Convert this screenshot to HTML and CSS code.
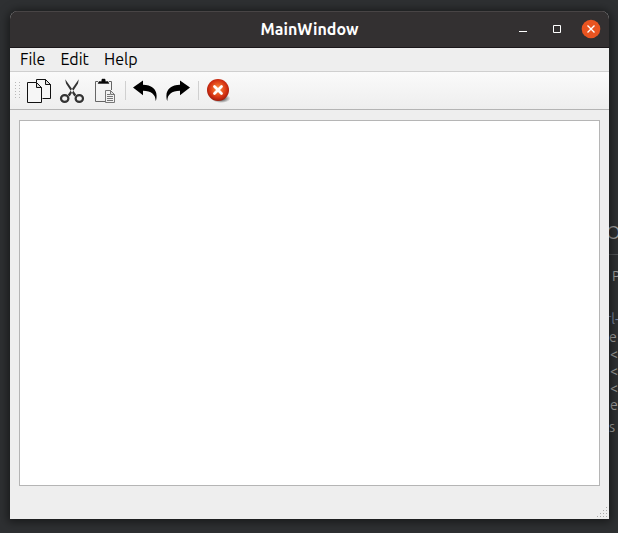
FILE: index.html
```html
<!DOCTYPE html>
<html lang="en">
<head>
<meta charset="utf-8">
<title>MainWindow</title>
<link rel="stylesheet" href="styles.css">
</head>
<body>
<div class="backdrop" aria-hidden="true">
  <span class="code heading">O</span>
  <span class="rule"></span>
  <span class="code label">P</span>
  <span class="code link">rl-</span>
  <span class="code l1">e</span>
  <span class="code l2">&lt;</span>
  <span class="code l3">&lt;</span>
  <span class="code l4">&lt;</span>
  <span class="code l5">e</span>
  <span class="code l6">s</span>
</div>
<main class="window">
  <header class="titlebar">
    <h1 class="title">MainWindow</h1>
    <div class="controls">
      <svg class="control" width="10" height="20" viewBox="0 0 10 20"><path d="M1 12.5h8" stroke="#fff"/></svg>
      <svg class="control" width="10" height="20" viewBox="0 0 10 20"><path d="M1.500 6.500h7v7h-7z" fill="none" stroke="#fff"/></svg>
      <svg class="control" width="20" height="20" viewBox="0 0 20 20"><circle cx="10" cy="10" r="9.300" fill="#e95420"/><path d="M6.500 6.500l7 7m0-7l-7 7" stroke="#fff" stroke-width="1.400"/></svg>
    </div>
  </header>
  <nav class="menubar">
    <span class="menu file">File</span>
    <span class="menu edit">Edit</span>
    <span class="menu help">Help</span>
  </nav>
  <div class="toolbar">
    <span class="handle"></span>
    <svg class="tool copy" width="26" height="26" viewBox="0 0 26 26"><g fill="#f6f6f6" stroke="#111" stroke-width="1"><path d="M10.500 4V1.500h9l5 5v14h-8"/><path d="M19.500 1.500v5h5z" fill="#ddd"/><path d="M1.500 4.500h9l5 5v15h-14z"/><path d="M10.500 4.500v5h5z" fill="#ddd"/></g></svg>
    <svg class="tool cut" width="26" height="26" viewBox="0 0 26 26"><path d="M6.200 1.200L7 5.500 15.400 18.400l1.800-1.700zM19.800 1.200L19 5.500 10.600 18.400l-1.800-1.700z" fill="#333"/><g fill="none" stroke="#333" stroke-width="2.200"><ellipse cx="5.700" cy="20.500" rx="3.700" ry="3.300"/><ellipse cx="20.300" cy="20.500" rx="3.700" ry="3.300"/></g><circle cx="13" cy="13.500" r=".7" fill="#ddd"/></svg>
    <svg class="tool paste" width="26" height="26" viewBox="0 0 26 26"><path d="M6 3.500H3.500v20H13M17 3.500h2.500V12" fill="none" stroke="#666"/><path d="M6 5.500L7 3.500h2.500L10 1h3l.500 2.500H16l1 2z" fill="#080808" stroke="#080808" stroke-width=".4"/><path d="M13.500 12.500h5l4 4v8h-9z" fill="#f2f2f2" stroke="#777"/><path d="M18.500 12.500v4h4z" fill="#ddd" stroke="#777"/><path d="M15 16.500h3M15 18.500h6M15 20.500h6M15 22.500h6" stroke="#777"/></svg>
    <span class="separator first"></span>
    <svg class="tool undo" width="26" height="26" viewBox="0 0 26 26"><path d="M1 9.500L11 2.500v4.200c8.200.1 13.600 4.200 13.600 11 0 2.300-.3 3.900-.9 5.300-.1-6.600-4.300-10-12.700-10.200v4.500z"/></svg>
    <svg class="tool redo" width="26" height="26" viewBox="0 0 26 26"><path d="M25 9.500L15 2.500v4.200C6.800 6.800 1.400 10.900 1.400 17.700c0 2.300.3 3.900.9 5.300.1-6.600 4.300-10 12.700-10.200v4.500z"/></svg>
    <span class="separator second"></span>
    <svg class="tool exit" width="26" height="26" viewBox="0 0 26 26"><defs><radialGradient id="red" cx=".5" cy=".45" r=".55"><stop offset="0" stop-color="#f9a052"/><stop offset=".4" stop-color="#ec5c25"/><stop offset=".75" stop-color="#d02e12"/><stop offset="1" stop-color="#9c1d0c"/></radialGradient><radialGradient id="shade"><stop offset=".4" stop-color="#333" stop-opacity=".65"/><stop offset="1" stop-color="#333" stop-opacity="0"/></radialGradient></defs><ellipse cx="16" cy="20.500" rx="9.500" ry="4.500" fill="url(#shade)"/><circle cx="13" cy="12" r="11" fill="url(#red)"/><path d="M9.500 8.500l7 7m0-7l-7 7" stroke="#fff" stroke-width="2.800" stroke-linecap="round"/></svg>
  </div>
  <section class="content"><div class="editor"></div></section>
  <svg class="grip" width="11" height="12" viewBox="0 0 11 12"><path d="M9 1h1v1H9zM6 4h1v1H6zM9 4h1v1H9zM3 7h1v1H3zM6 7h1v1H6zM9 7h1v1H9zM0 10h1v1H0zM3 10h1v1H3zM6 10h1v1H6zM9 10h1v1H9z" fill="#aaa"/></svg>
</main>
</body>
</html>
```
FILE: styles.css
```css
* { box-sizing: border-box; }
body {
  margin: 0;
  width: 618px;
  height: 533px;
  overflow: hidden;
  position: relative;
  padding: 11px 9px 14px 10px;
  background: #2e3032;
  font-family: Ubuntu, "Noto Sans", sans-serif;
}
.backdrop { position: absolute; inset: 0; overflow: hidden; }
.code {
  position: absolute;
  left: 609px;
  color: #a0a0a0;
  font-size: 14px;
  line-height: 18px;
}
.heading { left: 606px; top: 221px; font-size: 19px; line-height: 22px; }
.rule { position: absolute; left: 609px; top: 254px; width: 9px; height: 1px; background: #505254; }
.label { left: 612px; top: 267px; }
.link { left: 606px; top: 310px; color: #7884a0; }
.l1 { top: 328px; }
.l2 { left: 610px; top: 345px; }
.l3 { left: 610px; top: 362px; }
.l4 { left: 610px; top: 379px; }
.l5 { left: 610px; top: 396px; }
.l6 { top: 418px; }
.window {
  position: relative;
  display: flex;
  flex-direction: column;
  height: 508px;
  border-radius: 8px 8px 0 0;
  overflow: hidden;
  background: #eee;
  box-shadow: 0 1px 10px 2px rgba(0, 0, 0, .5);
}
.titlebar {
  display: grid;
  grid-template-columns: 1fr auto 1fr;
  align-items: center;
  height: 37px;
  padding-bottom: 2px;
  background: #333031;
  border-top: 1px solid #484445;
  border-bottom: 1px solid #1b171a;
}
.title {
  grid-column: 2;
  margin: 0;
  color: #fff;
  font-size: 16px;
  font-weight: 700;
  line-height: 22px;
}
.controls { display: flex; justify-content: flex-end; align-items: center; gap: 24px; padding-right: 8px; }
.control:last-child { margin-left: -5px; }
.menubar {
  display: flex;
  height: 24px;
  padding-left: 10px;
  border-bottom: 1px solid #cfcfcf;
  font-size: 16px;
  line-height: 22px;
  color: #000;
}
.file { width: 40.5px; }
.edit { width: 43.5px; }
.toolbar {
  display: flex;
  align-items: center;
  height: 38px;
  padding-left: 5px;
  background: linear-gradient(#fafafa, #eee);
  border-bottom: 1px solid #b4b4b4;
}
.handle {
  width: 5px;
  height: 17px;
  margin-right: 6px;
  background: radial-gradient(circle at .5px .5px, #b8b8b8 .7px, transparent .8px) 0 0 / 4px 3px;
}
.tool { flex: none; margin-right: 7px; }
.separator { width: 1px; height: 19px; background: #d0d0d0; }
.first { margin-right: 6px; }
.second { margin-right: 6px; }
.content { flex: 1; padding: 10px 9px 33px; }
.editor { height: 100%; background: #fff; border: 1px solid #b5b5b5; }
.grip { position: absolute; right: 1px; bottom: 1px; }
```
